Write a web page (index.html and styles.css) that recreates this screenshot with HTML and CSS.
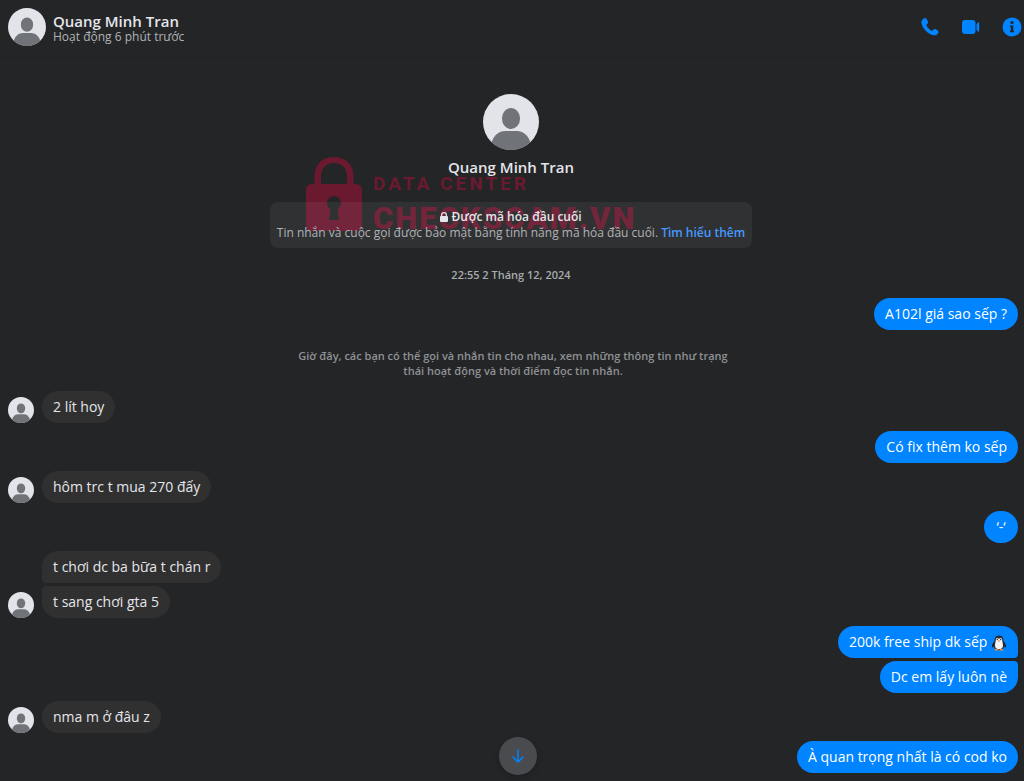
FILE: index.html
```
<!DOCTYPE html>
<html lang="vi">

<head>
  <meta charset="UTF-8">
  <meta name="viewport" content="width=device-width, initial-scale=1.0">
  <title>Quang Minh Tran</title>
  <link rel="stylesheet" href="styles.css">
</head>

<body>

  <!-- default profile picture, used by every avatar -->
  <svg class="sprite" aria-hidden="true">
    <symbol id="person" viewBox="0 0 56 56">
      <circle cx="28" cy="28" r="28" fill="#e2e4ea" />
      <rect x="19" y="14" width="18" height="21" rx="9" ry="10" fill="#707378" />
      <path d="M8.600 48.200C11 41 16 37 22 37h12c6 0 11 4 13.400 11.200A28 28 0 0 1 8.600 48.200z" fill="#707378" />
    </symbol>
  </svg>

  <header class="chat-header">
    <svg class="avatar avatar-medium"><use href="#person" /></svg>
    <div class="contact">
      <h1>Quang Minh Tran</h1>
      <p>Hoạt động 6 phút trước</p>
    </div>
    <div class="actions">
      <button type="button" aria-label="Gọi thoại">
        <svg viewBox="0 0 20 20">
          <path d="M4.200 1.300c.9-.6 1.900-.3 2.400.6l1.200 2.300c.5.900.4 1.800-.3 2.500l-.8.900c-.3.300-.3.700-.1 1.100.9 1.900 2.900 4 4.900 5 .4.200.8.100 1.100-.2l.9-.9c.7-.7 1.600-.8 2.400-.3l1.800 1.200c.9.600 1.100 1.600.5 2.500-1 1.700-2.600 2.600-4.600 2.300C8.200 17.500 2.200 11.300 1.400 5.800c-.3-1.900 1.200-3.600 2.800-4.500z" />
        </svg>
      </button>
      <button type="button" aria-label="Gọi video">
        <svg viewBox="0 0 20 20">
          <rect x="1" y="3" width="13.500" height="14" rx="3" />
          <path d="M15.500 7.500 17 5.500c.5-.5 1.200-.3 1.200.6v7.800c0 .9-.7 1.100-1.200.6l-1.500-2z" />
        </svg>
      </button>
      <button type="button" aria-label="Thông tin">
        <svg viewBox="0 0 20 20">
          <circle cx="10" cy="10" r="9.500" />
          <circle cx="10" cy="5.500" r="1.600" fill="#242526" />
          <path d="M8 8.500h3.300v5.200H12v1.600H8v-1.600h.8v-3.600H8z" fill="#242526" />
        </svg>
      </button>
    </div>
  </header>

  <main>
    <section class="intro">
      <svg class="avatar avatar-large"><use href="#person" /></svg>
      <h2>Quang Minh Tran</h2>
      <div class="encrypted">
        <strong>
          <svg class="lock" viewBox="0 0 8 10"><path d="M0 5q0-1 1-1V3a3 3 0 0 1 6 0v1q1 0 1 1v4q0 1-1 1H1q-1 0-1-1zM2.200 4h3.600V3a1.800 1.800 0 0 0-3.600 0z" /></svg>
          Được mã hóa đầu cuối
        </strong>
        <p>Tin nhắn và cuộc gọi được bảo mật bằng tính năng mã hóa đầu cuối. <a href="#">Tìm hiểu thêm</a></p>
      </div>
      <div class="watermark">
        <svg viewBox="0 0 56 75">
          <path fill-rule="evenodd" d="M8.500 27V19C8.500 7 17 0 28 0s19.500 7 19.500 19v8H50q6 0 6 6v35q0 6-6 6H6q-6 0-6-6V33q0-6 6-6zM15 27h26v-8C41 11 35.500 6 28 6s-13 5-13 13zM24.500 52 23 63h10l-1.500-11a7 7 0 1 0-7 0z" />
        </svg>
        <div>
          <span class="watermark-top">DATA CENTER</span>
          <span class="watermark-name">CHECKSCAM.VN</span>
        </div>
      </div>
    </section>

    <p class="timestamp">22:55 2 Tháng 12, 2024</p>

    <div class="messages">
      <div class="group sent">
        <p class="bubble">A102l giá sao sếp ?</p>
      </div>

      <p class="notice">Giờ đây, các bạn có thể gọi và nhắn tin cho nhau, xem những thông tin như trạng thái hoạt động và thời điểm đọc tin nhắn.</p>

      <div class="group received">
        <svg class="avatar avatar-small"><use href="#person" /></svg>
        <p class="bubble">2 lít hoy</p>
      </div>
      <div class="group sent">
        <p class="bubble">Có fix thêm ko sếp</p>
      </div>
      <div class="group received">
        <svg class="avatar avatar-small"><use href="#person" /></svg>
        <p class="bubble">hôm trc t mua 270 đấy</p>
      </div>
      <div class="group sent">
        <p class="bubble">‘-‘</p>
      </div>
      <div class="group received">
        <svg class="avatar avatar-small"><use href="#person" /></svg>
        <div class="stack">
          <p class="bubble">t chơi dc ba bữa t chán r</p>
          <p class="bubble">t sang chơi gta 5</p>
        </div>
      </div>
      <div class="group sent">
        <div class="stack">
          <p class="bubble">200k free ship dk sếp
            <svg class="emoji" viewBox="0 0 16 16" role="img" aria-label="🐧">
              <path d="M4 6C1.500 8 .8 10 1 12.500L4 11M12 6c2.500 2 3.200 4 3 6.500L12 11" fill="#1b1d22" />
              <path d="M8 .5c-3 0-4.500 2-4.500 4.500 0 2-.8 3.500-.8 5.500C2.700 13.500 5 15 8 15s5.300-1.500 5.300-4.500c0-2-.8-3.500-.8-5.500C12.500 2.500 11 .5 8 .5z" fill="#2a2d33" />
              <path d="M8 4C6.500 2.300 4.700 3.200 4.800 5c.1 1.400-.8 3.500-.8 5.500C4 13 5.800 14.200 8 14.200s4-1.200 4-3.700c0-2-.9-4.100-.8-5.500C11.300 3.200 9.500 2.300 8 4z" fill="#f3f3f5" />
              <circle cx="6.300" cy="4.500" r=".7" fill="#222" />
              <circle cx="9.700" cy="4.500" r=".7" fill="#222" />
              <path d="M6.700 5.500h2.600L8 7.300zM3.500 15.500q0-2 2-2t2 2zM8.500 15.500q0-2 2-2t2 2z" fill="#e08a4f" />
            </svg>
          </p>
          <p class="bubble">Dc em lấy luôn nè</p>
        </div>
      </div>
      <div class="group received">
        <svg class="avatar avatar-small"><use href="#person" /></svg>
        <p class="bubble">nma m ở đâu z</p>
      </div>
      <div class="group sent">
        <p class="bubble">À quan trọng nhất là có cod ko</p>
      </div>
    </div>
  </main>

  <button type="button" class="scroll-down" aria-label="Xuống cuối">
    <svg viewBox="0 0 14 14"><path d="M7 1v12M2 8l5 5 5-5" /></svg>
  </button>

</body>

</html>
```
FILE: styles.css
```
* {
  box-sizing: border-box;
}

body {
  margin: 0;
  font-family: 'Open Sans', 'Noto Sans', sans-serif;
  font-size: 14px;
  color: #e4e6eb;
  background: #242526;
}

h1,
h2,
p {
  margin: 0;
}

h1,
h2 {
  font-size: 15px;
  line-height: 20px;
  font-weight: 600;
}

button {
  padding: 0;
  border: none;
  background: none;
  cursor: pointer;
}

.sprite {
  position: absolute;
  width: 0;
  height: 0;
}

.avatar {
  display: block;
  flex: none;
}

.avatar-small {
  width: 26px;
  height: 26px;
}

.avatar-medium {
  width: 38px;
  height: 38px;
}

.avatar-large {
  width: 56px;
  height: 56px;
}

/* header */
.chat-header {
  display: flex;
  align-items: center;
  gap: 7px;
  height: 58px;
  padding: 0 2px 4px 8px;
  border-bottom: 1px solid #212223;
}

.contact {
  flex: 1;
  padding-top: 2px;
}

.contact h1 {
  line-height: 18px;
}

.contact p {
  font-size: 12px;
  line-height: 14px;
  color: #b0b3b8;
}

.actions {
  display: flex;
  gap: 21px;
}

.actions svg {
  display: block;
  width: 20px;
  height: 20px;
  fill: #0084ff;
}

/* conversation intro */
.intro {
  position: relative;
  z-index: 0;
  display: flex;
  flex-direction: column;
  align-items: center;
  padding: 36px 2px 0 0;
}

.intro h2 {
  margin: 7px 0 25px;
}

.encrypted {
  padding: 7px;
  border-radius: 8px;
  background: rgba(255, 255, 255, 0.06);
  font-size: 12px;
  line-height: 16px;
  text-align: center;
  color: #b0b3b8;
}

.encrypted strong {
  font-weight: 600;
  color: #e4e6eb;
}

.encrypted a {
  font-weight: 600;
  color: #4599ff;
  text-decoration: none;
}

.lock {
  width: 8px;
  height: 10px;
  fill: #e4e6eb;
  vertical-align: -1px;
}

.watermark {
  position: absolute;
  z-index: -1;
  left: 50%;
  bottom: 13px;
  display: flex;
  gap: 11px;
  margin-left: -206px;
  font-family: Roboto, sans-serif;
  color: #6b192f;
}

.watermark svg {
  width: 56px;
  height: 75px;
  fill: #6b192f;
}

.watermark span {
  display: block;
  white-space: nowrap;
}

.watermark-top {
  margin-top: 16px;
  font-size: 19px;
  line-height: 22px;
  font-weight: 700;
  letter-spacing: 3px;
}

.watermark-name {
  margin-top: 8px;
  font-size: 31px;
  line-height: 32px;
  font-weight: 900;
  letter-spacing: 2px;
}

.timestamp {
  padding: 19px 2px 15px 0;
  font-size: 11px;
  line-height: 16px;
  font-weight: 600;
  text-align: center;
  color: #a8abaf;
}

/* messages */
.messages {
  display: flex;
  flex-direction: column;
  gap: 8px;
  padding: 0 6px 8px 8px;
}

.notice {
  max-width: 450px;
  margin: 10px auto 5px;
  font-size: 11px;
  line-height: 15px;
  font-weight: 600;
  text-align: center;
  color: #8e9195;
}

.group {
  display: flex;
  align-items: flex-end;
  gap: 8px;
}

.sent {
  justify-content: flex-end;
}

.stack {
  display: flex;
  flex-direction: column;
  align-items: flex-start;
  gap: 3px;
}

.sent .stack {
  align-items: flex-end;
}

.bubble {
  min-width: 34px;
  padding: 6px 11px;
  border-radius: 16px;
  line-height: 20px;
  text-align: center;
  background: #303030;
}

.sent .bubble {
  color: #ffffff;
  background: #0084ff;
}

.received .stack .bubble:first-child {
  border-bottom-left-radius: 4px;
}

.received .stack .bubble:last-child {
  border-top-left-radius: 4px;
}

.sent .stack .bubble:first-child {
  border-bottom-right-radius: 4px;
}

.sent .stack .bubble:last-child {
  border-top-right-radius: 4px;
}

.emoji {
  width: 16px;
  height: 16px;
  vertical-align: -4px;
}

.scroll-down {
  position: fixed;
  left: 50%;
  bottom: 6px;
  display: flex;
  align-items: center;
  justify-content: center;
  width: 38px;
  height: 38px;
  margin-left: -13px;
  border-radius: 50%;
  background: #4a4b4e;
  box-shadow: 0 2px 6px rgba(0, 0, 0, 0.2);
}

.scroll-down svg {
  width: 14px;
  height: 14px;
  fill: none;
  stroke: #0084ff;
  stroke-width: 1.5;
  stroke-linecap: round;
}
```
